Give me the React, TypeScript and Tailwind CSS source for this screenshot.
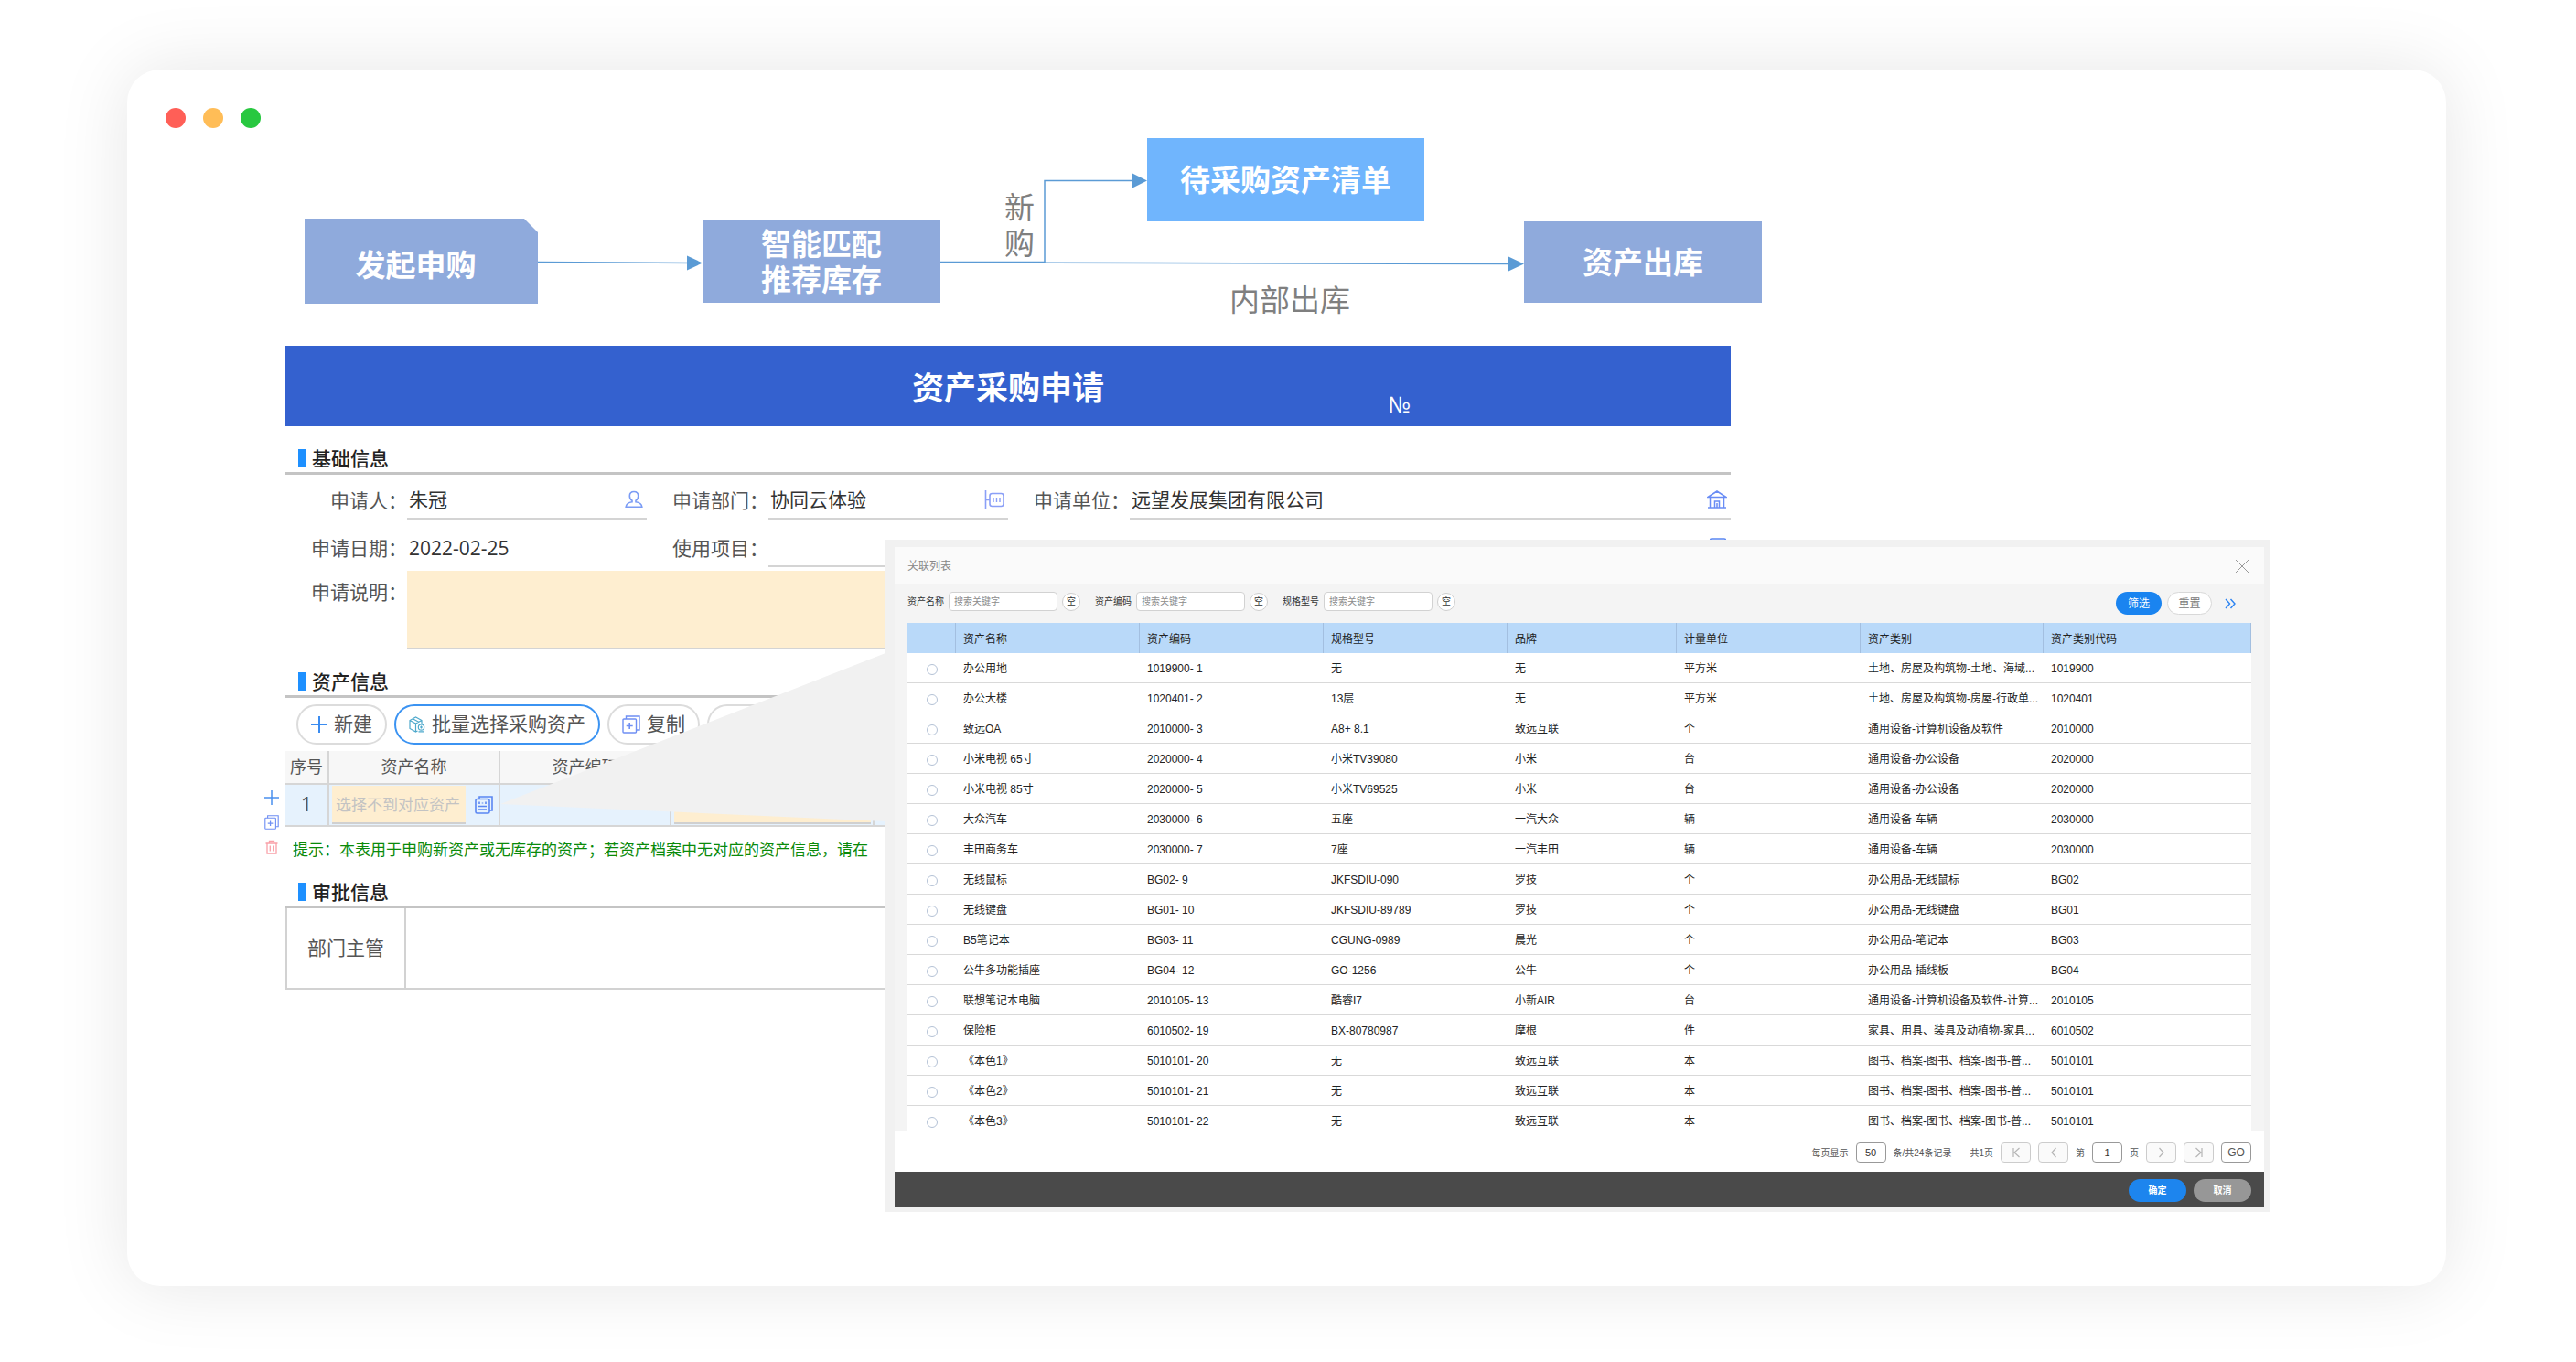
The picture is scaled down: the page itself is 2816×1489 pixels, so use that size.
import type { ReactNode } from "react";

const TrafficLights = () => (
  <header className="flex gap-[19px] px-[42px] pt-[42px]">
    <span className="size-[22px] rounded-full bg-[#ff5f57]" />
    <span className="size-[22px] rounded-full bg-[#ffbd57]" />
    <span className="size-[22px] rounded-full bg-[#28c840]" />
  </header>
);

const PersonIcon = () => (
  <svg viewBox="0 0 20 20" className="size-5" fill="none" stroke="#7b9cf5" strokeWidth="1.6">
    <path d="M10 1.500C7 1.500 5.300 3.500 5.300 6.200c0 2.200 1 4 2.700 5v1.600c-3.200.4-6.300 1.700-6.800 5.400h17.600c-.5-3.700-3.600-5-6.800-5.400v-1.600c1.700-1 2.700-2.800 2.700-5 0-2.700-1.700-4.700-4.700-4.700z" />
  </svg>
);

const DepartmentIcon = () => (
  <svg viewBox="0 0 22 20" className="h-5 w-[22px]" fill="none" stroke="#8a9ff7" strokeWidth="1.6">
    <path d="M1.500 0v20M1.500 10.500h4.500" />
    <rect x="6" y="3.500" width="15" height="14" rx="2.500" />
    <path d="M10 8v5M13.500 8v5M17 8v5" strokeWidth="1.400" />
  </svg>
);

const HouseIcon = () => (
  <svg viewBox="0 0 22 20" className="h-5 w-[22px]" fill="none" stroke="#6a8df5" strokeWidth="1.5">
    <path d="M1 7.500 11 1l10 6.500zM3.500 7.500V19M18.500 7.500V19M1 19h20M8.500 19v-7h5v7M11 14v5" />
  </svg>
);

const FormIcon = () => (
  <svg viewBox="0 0 20 20" className="size-5" fill="none" stroke="#5a86f2" strokeWidth="1.5">
    <rect x="1.500" y="1" width="17" height="18" rx="1.500" />
    <path d="M5 4.500h3M12 4.500h3M5 10h10M5 14h10" />
  </svg>
);

const PlusIcon = () => (
  <svg viewBox="0 0 18 18" className="size-[18px]" fill="none" stroke="#3b8cf0" strokeWidth="2">
    <path d="M9 0v18M0 9h18" />
  </svg>
);

const CubeIcon = () => (
  <svg viewBox="0 0 18 18" className="size-[18px]" fill="none" stroke="#4fa9cc" strokeWidth="1.2">
    <path d="M9.500 16 7.500 17 1 13.500v-9L7.500 1 14 4.500V8M1 4.500 7.500 8 14 4.500M7.500 8v8.500M4.200 2.800l6.500 3.500" />
    <circle cx="13.500" cy="12" r="3.200" />
    <path d="M10.500 16.800h6.500M12 12h3M13.500 10.500v3" />
  </svg>
);

const CopyIcon = ({ className }: { className: string }) => (
  <svg viewBox="0 0 20 20" className={className} fill="none" stroke="#6f8ff3" strokeWidth="1.4">
    <path d="M4.500 4V1H19v15h-3.500" />
    <rect x="1" y="4" width="14.500" height="15" rx="1" />
    <path d="M8.200 8v7M4.700 11.500h7" strokeWidth="1.600" />
  </svg>
);

const PickerIcon = () => (
  <svg viewBox="0 0 20 20" className="size-5" fill="none" stroke="#5a86f2" strokeWidth="1.6">
    <path d="M5 3.500V1h14v15h-3" />
    <rect x="1" y="3.500" width="15" height="15.500" rx="1.500" />
    <path d="M5 6.500v2.500M12 6.500v2.500M8.500 7.500v1M4 11.500h9M4 15h9" />
  </svg>
);

const TrashIcon = () => (
  <svg viewBox="0 0 16 16" className="size-4" fill="none" stroke="#f9a0a8" strokeWidth="1.3">
    <path d="M1.500 4h13M5.500 4V1.500h5V4M3 4v11h10V4M6.300 6.500v6M9.700 6.500v6" />
  </svg>
);

const FlowChart = () => (
  <div className="relative h-[227px] text-[33px] leading-[39px]">
    <svg className="absolute left-0 top-0 h-[227px] w-[1620px]" viewBox="0 0 1620 227" fill="none">
      <path d="M21 88h240l15 15v78H21z" fill="#8faadc" />
      <g stroke="#5b9bd5" strokeWidth="1.5">
        <path d="M276 135.500l170 1" />
        <path d="M716 135.500h114v-89h100" />
        <path d="M716 136l624 1.500" />
      </g>
      <g fill="#5b9bd5">
        <path d="M439 128.500l17 8-17 8z" />
        <path d="M926 38.500l16 8-16 8z" />
        <path d="M1337 129.500l17 8-17 8z" />
      </g>
    </svg>
    <div className="absolute left-[21px] top-[88px] flex h-[93px] w-[255px] items-center justify-center pr-3 pt-2 font-bold text-white">发起申购</div>
    <div className="absolute left-[456px] top-[90px] flex h-[90px] w-[260px] items-center justify-center bg-[#8faadc] font-bold text-white">
      <p className="w-[132px]">智能匹配推荐库存</p>
    </div>
    <div className="absolute left-[942px] top-0 flex h-[91px] w-[303px] items-center justify-center bg-[#70b5fd] font-bold text-white">待采购资产清单</div>
    <div className="absolute left-[1354px] top-[91px] flex h-[89px] w-[260px] items-center justify-center bg-[#8faadc] font-bold text-white">资产出库</div>
    <div className="absolute left-[786px] top-[56px] w-[33px] text-[#7f7f7f]">新购</div>
    <div className="absolute left-[1032px] top-[157px] text-[#7f7f7f]">内部出库</div>
  </div>
);

const SectionTitle = ({ children }: { children: ReactNode }) => (
  <h2 className="flex items-center gap-[7px] border-b-3 border-[#c4c4c4] pb-1 pl-[14px] text-[21px] leading-[22px] font-medium text-[#222]">
    <span className="h-5 w-2 bg-[#1e90ff]" />
    {children}
  </h2>
);

const Label = ({ htmlFor, children }: { htmlFor: string; children: ReactNode }) => (
  <label htmlFor={htmlFor} className="text-right whitespace-nowrap text-[#555]">{children}：</label>
);

const Field = ({ id, value, icon, line = true }: { id: string; value: string; icon?: ReactNode; line?: boolean }) => (
  <div className={line ? "flex h-[42px] items-center border-b-2 border-[#d4d4d4]" : "flex h-[42px] items-center"}>
    <input id={id} defaultValue={value} className="min-w-0 flex-1 bg-transparent px-[2px] text-[#333] outline-none" />
    <span className="pr-1">{icon}</span>
  </div>
);

const BaseInfo = () => (
  <div className="text-[21px] leading-[30px]">
    <div className="mt-[7px] grid grid-cols-[133px_262px_133px_262px_133px_1fr] items-center gap-y-[10px]">
      <Label htmlFor="applicant">申请人</Label>
      <Field id="applicant" value="朱冠" icon={<PersonIcon />} />
      <Label htmlFor="department">申请部门</Label>
      <Field id="department" value="协同云体验" icon={<DepartmentIcon />} />
      <Label htmlFor="company">申请单位</Label>
      <Field id="company" value="远望发展集团有限公司" icon={<HouseIcon />} />
      <Label htmlFor="date">申请日期</Label>
      <Field id="date" value="2022-02-25" line={false} />
      <Label htmlFor="project">使用项目</Label>
      <div className="col-span-3">
        <Field id="project" value="" icon={<FormIcon />} />
      </div>
    </div>
    <div className="mt-1 grid grid-cols-[133px_1fr]">
      <div className="pt-2 text-right">
        <Label htmlFor="remark">申请说明</Label>
      </div>
      <textarea id="remark" className="block h-[86px] w-full resize-none border-b-2 border-[#d4d4d4] bg-[#feeed0] outline-none" />
    </div>
  </div>
);

const toolButton = "flex h-11 items-center gap-[7px] rounded-full border-2 bg-white px-[14px] text-[#555]";

const AssetInfo = () => (
  <>
    <div className="flex gap-2 pl-3 pt-[7px] text-[21px]">
      <button className={toolButton + " border-[#dcdcdc]"}><PlusIcon />新建</button>
      <button className={toolButton + " border-[#3b93f2]"}><CubeIcon />批量选择采购资产</button>
      <button className={toolButton + " border-[#dcdcdc]"}><CopyIcon className="size-5" />复制</button>
      <button aria-label="more" className={toolButton + " w-[100px] border-[#dcdcdc]"} />
    </div>
    <div className="relative mt-[7px]">
      <table className="w-full table-fixed border-collapse text-[18px] text-[#555]">
        <colgroup>
          <col className="w-[47px]" />
          <col className="w-[187px]" />
          <col className="w-[187px]" />
          <col className="w-[222px]" />
          <col />
        </colgroup>
        <thead>
          <tr className="h-9 border-b-2 border-[#d6d6d6] bg-[#f7f7f7]">
            <th className="border-r-2 border-[#d6d6d6] font-normal">序号</th>
            <th className="border-r-2 border-[#d6d6d6] font-normal">资产名称</th>
            <th className="border-r-2 border-[#d6d6d6] font-normal">资产编码</th>
            <th className="border-r-2 border-[#d6d6d6]" />
            <th />
          </tr>
        </thead>
        <tbody>
          <tr className="h-[46px] border-b-2 border-[#d6d6d6] bg-[#e6f2fd]">
            <td className="border-r-2 border-[#d6d6d6] text-center text-[21px]">1</td>
            <td className="border-r-2 border-[#d6d6d6] p-0">
              <div className="flex items-center gap-[10px] pl-[3px]">
                <input aria-label="资产名称" placeholder="选择不到对应资产" className="h-[42px] w-[146px] border-b-2 border-[#d0d0d0] bg-[#feeed0] px-1 text-[17px] outline-none placeholder:text-[#c3c3c3]" />
                <PickerIcon />
              </div>
            </td>
            <td className="border-r-2 border-[#d6d6d6]" />
            <td className="border-r-2 border-[#d6d6d6] p-0">
              <input aria-label="规格型号" className="ml-[3px] block h-[42px] w-[215px] border-b-2 border-[#d0d0d0] bg-[#feeed0]" />
            </td>
            <td />
          </tr>
        </tbody>
      </table>
      <div className="absolute -left-[23px] top-[43px] flex flex-col items-center gap-[11px]">
        <button aria-label="add row"><svg viewBox="0 0 16 16" className="block size-4" stroke="#4a90ee" strokeWidth="1.5"><path d="M8 0v16M0 8h16" /></svg></button>
        <button aria-label="copy row"><CopyIcon className="block size-4" /></button>
        <button aria-label="delete row"><TrashIcon /></button>
      </div>
    </div>
    <p className="mt-3 overflow-hidden pl-2 text-[17px] leading-[26px] whitespace-nowrap text-[#0a8a0a]">
      提示：本表用于申购新资产或无库存的资产；若资产档案中无对应的资产信息，请在
    </p>
  </>
);

const columns = ["资产名称", "资产编码", "规格型号", "品牌", "计量单位", "资产类别", "资产类别代码"];

const rows = [
  ["办公用地", "1019900- 1", "无", "无", "平方米", "土地、房屋及构筑物-土地、海域...", "1019900"],
  ["办公大楼", "1020401- 2", "13层", "无", "平方米", "土地、房屋及构筑物-房屋-行政单...", "1020401"],
  ["致远OA", "2010000- 3", "A8+ 8.1", "致远互联", "个", "通用设备-计算机设备及软件", "2010000"],
  ["小米电视 65寸", "2020000- 4", "小米TV39080", "小米", "台", "通用设备-办公设备", "2020000"],
  ["小米电视 85寸", "2020000- 5", "小米TV69525", "小米", "台", "通用设备-办公设备", "2020000"],
  ["大众汽车", "2030000- 6", "五座", "一汽大众", "辆", "通用设备-车辆", "2030000"],
  ["丰田商务车", "2030000- 7", "7座", "一汽丰田", "辆", "通用设备-车辆", "2030000"],
  ["无线鼠标", "BG02- 9", "JKFSDIU-090", "罗技", "个", "办公用品-无线鼠标", "BG02"],
  ["无线键盘", "BG01- 10", "JKFSDIU-89789", "罗技", "个", "办公用品-无线键盘", "BG01"],
  ["B5笔记本", "BG03- 11", "CGUNG-0989", "晨光", "个", "办公用品-笔记本", "BG03"],
  ["公牛多功能插座", "BG04- 12", "GO-1256", "公牛", "个", "办公用品-插线板", "BG04"],
  ["联想笔记本电脑", "2010105- 13", "酷睿I7", "小新AIR", "台", "通用设备-计算机设备及软件-计算...", "2010105"],
  ["保险柜", "6010502- 19", "BX-80780987", "摩根", "件", "家具、用具、装具及动植物-家具...", "6010502"],
  ["《本色1》", "5010101- 20", "无", "致远互联", "本", "图书、档案-图书、档案-图书-普...", "5010101"],
  ["《本色2》", "5010101- 21", "无", "致远互联", "本", "图书、档案-图书、档案-图书-普...", "5010101"],
  ["《本色3》", "5010101- 22", "无", "致远互联", "本", "图书、档案-图书、档案-图书-普...", "5010101"],
];

const AssetTable = () => (
  <div className="h-[555px] overflow-hidden bg-white">
    <table className="w-full table-fixed border-separate border-spacing-0 text-left text-[12px] leading-4 text-[#222]">
      <colgroup>
        <col className="w-[53px]" />
        <col className="w-[201px]" />
        <col className="w-[201px]" />
        <col className="w-[201px]" />
        <col className="w-[185px]" />
        <col className="w-[201px]" />
        <col className="w-[200px]" />
        <col />
      </colgroup>
      <thead>
        <tr className="h-[33px] bg-[#b9d9f9]">
          <th className="border-r border-[#a3bfe0] p-0" />
          {columns.map((c) => (
            <th key={c} className="border-r border-[#a3bfe0] p-0 pl-2 pt-[2px] font-normal">{c}</th>
          ))}
        </tr>
      </thead>
      <tbody>
        {rows.map((r) => (
          <tr key={r[1]} className="h-[33px]">
            <td className="border-b border-[#d9d9d9] p-0 pt-[3px]">
              <input type="radio" name="asset" aria-label={r[0]} className="mx-auto block size-3 appearance-none rounded-full border border-[#b4c2d6] bg-white" />
            </td>
            {r.map((cell, i) => (
              <td key={i} className="border-b border-[#d9d9d9] p-0 pl-2 pt-[2px] whitespace-nowrap">{cell}</td>
            ))}
          </tr>
        ))}
      </tbody>
    </table>
  </div>
);

const Filter = ({ id, label }: { id: string; label: string }) => (
  <div className="flex items-center">
    <label htmlFor={id} className="w-[45px] text-[#333]">{label}</label>
    <input id={id} placeholder="搜索关键字" className="h-[21px] w-[119px] rounded-sm border border-[#d2d2d2] bg-white px-[5px] outline-none placeholder:text-[#8c8c8c]" />
    <button className="ml-[5px] size-5 rounded-full border border-[#cfcfcf] bg-white text-[#333]">空</button>
  </div>
);

const pagerButton = "flex h-[22px] w-[33px] items-center justify-center rounded border";

const PageArrow = ({ label, d }: { label: string; d: string }) => (
  <button aria-label={label} className={pagerButton + " border-[#ccc] bg-[#fafafa]"}>
    <svg viewBox="0 0 12 12" className="size-3" fill="none" stroke="#b5b5b5" strokeWidth="1.2"><path d={d} /></svg>
  </button>
);

const Pager = () => (
  <div className="flex h-[45px] items-center justify-end gap-2 border-t border-[#d9d9d9] bg-white pt-[2px] pr-[14px] text-[10px] text-[#555]">
    <label htmlFor="size">每页显示</label>
    <input id="size" defaultValue="50" className="h-[22px] w-[33px] rounded border border-[#999] text-center text-[11px] text-[#333]" />
    <span className="mr-3">条/共24条记录</span>
    <span>共1页</span>
    <PageArrow label="first page" d="M3 1v10M9.500 1 4 6l5.500 5" />
    <PageArrow label="previous page" d="M8.500 1 4 6l4.500 5" />
    <label htmlFor="page">第</label>
    <input id="page" defaultValue="1" className="h-[22px] w-[33px] rounded border border-[#999] text-center text-[11px] text-[#333]" />
    <span>页</span>
    <PageArrow label="next page" d="M3.500 1 8 6l-4.500 5" />
    <PageArrow label="last page" d="M9 1v10M2.500 1 8 6l-5.500 5" />
    <button className={pagerButton + " border-[#999] text-[12px]"}>GO</button>
  </div>
);

const AssetDialog = () => (
  <section role="dialog" aria-label="关联列表" className="absolute left-[828px] right-[193px] top-[514px] bg-[#f1f1f1] pt-2 pr-[6px] pb-[5px] pl-[11px] font-['Liberation_Sans','Noto_Sans_CJK_SC',sans-serif]">
    <div className="flex h-10 items-center justify-between bg-[#fafafa] pt-[2px] pr-[17px] pl-[14px] text-[12px] text-[#888]">
      <h3>关联列表</h3>
      <button aria-label="close">
        <svg viewBox="0 0 14 14" className="block size-[14px]" stroke="#999" strokeWidth="1"><path d="M0 0l14 14M14 0 0 14" /></svg>
      </button>
    </div>
    <div className="bg-[#f4f4f4] px-[14px]">
      <div className="flex h-[43px] items-center justify-between pb-1 text-[10px]">
        <div className="flex gap-4">
          <Filter id="f-name" label="资产名称" />
          <Filter id="f-code" label="资产编码" />
          <Filter id="f-model" label="规格型号" />
        </div>
        <div className="flex items-center gap-[6px] pt-1 text-[12px]">
          <button className="h-[25px] w-[50px] rounded-full bg-[#1a84f0] text-white">筛选</button>
          <button className="h-[25px] w-[49px] rounded-full border border-[#d8d8d8] bg-white text-[#777]">重置</button>
          <button aria-label="expand" className="pr-[17px] pl-2">
            <svg viewBox="0 0 12 12" className="block size-3" fill="none" stroke="#2b83f2" strokeWidth="1.4"><path d="M1 1l4.500 5L1 11M6.500 1 11 6l-4.500 5" /></svg>
          </button>
        </div>
      </div>
      <AssetTable />
    </div>
    <Pager />
    <div className="flex h-[39px] items-center justify-end gap-2 bg-[#4a4a4a] pt-[2px] pr-[14px] text-[10px] font-bold text-white">
      <button className="h-[25px] w-[63px] rounded-full bg-[#1d85ee]">确定</button>
      <button className="h-[25px] w-[63px] rounded-full bg-[#979797]">取消</button>
    </div>
  </section>
);

const App = () => {
  return (
    <div className="bg-white pt-[76px] pr-[142px] pb-[83px] pl-[139px] font-['Open_Sans','Noto_Sans_CJK_SC',sans-serif]">
      <main className="relative rounded-[36px] bg-white pb-[324px] shadow-[0_0_80px_rgba(0,0,0,0.10)]">
        <TrafficLights />
        <div className="max-w-[1753px] pt-[11px] pl-[173px]">
          <FlowChart />
          <div className="mb-6 grid h-[88px] grid-cols-[1fr_211px_1fr] items-center bg-[#3461cf] pt-1 text-white">
            <h1 className="col-start-2 text-center text-[35px] leading-[46px] font-bold whitespace-nowrap">资产采购申请</h1>
            <span className="pt-9 pl-[310px] text-[24px] leading-[46px]">№</span>
          </div>
          <SectionTitle>基础信息</SectionTitle>
          <BaseInfo />
          <div className="h-6" />
          <SectionTitle>资产信息</SectionTitle>
          <AssetInfo />
          <div className="h-[22px]" />
          <SectionTitle>审批信息</SectionTitle>
          <div className="flex h-[89px] border-x-2 border-b-2 border-[#d2d2d2] text-[21px] text-[#555]">
            <div className="flex w-[130px] items-center justify-center border-r-2 border-[#d2d2d2]">部门主管</div>
          </div>
        </div>
        {/* callout from the picker cell to the dialog */}
        <svg className="absolute left-[408px] top-[630px] h-[200px] w-[421px]" viewBox="0 0 421 200">
          <path d="M0 173 421 8v184z" fill="#f1f1f1" />
        </svg>
        <AssetDialog />
      </main>
    </div>
  );
};

export default App;
